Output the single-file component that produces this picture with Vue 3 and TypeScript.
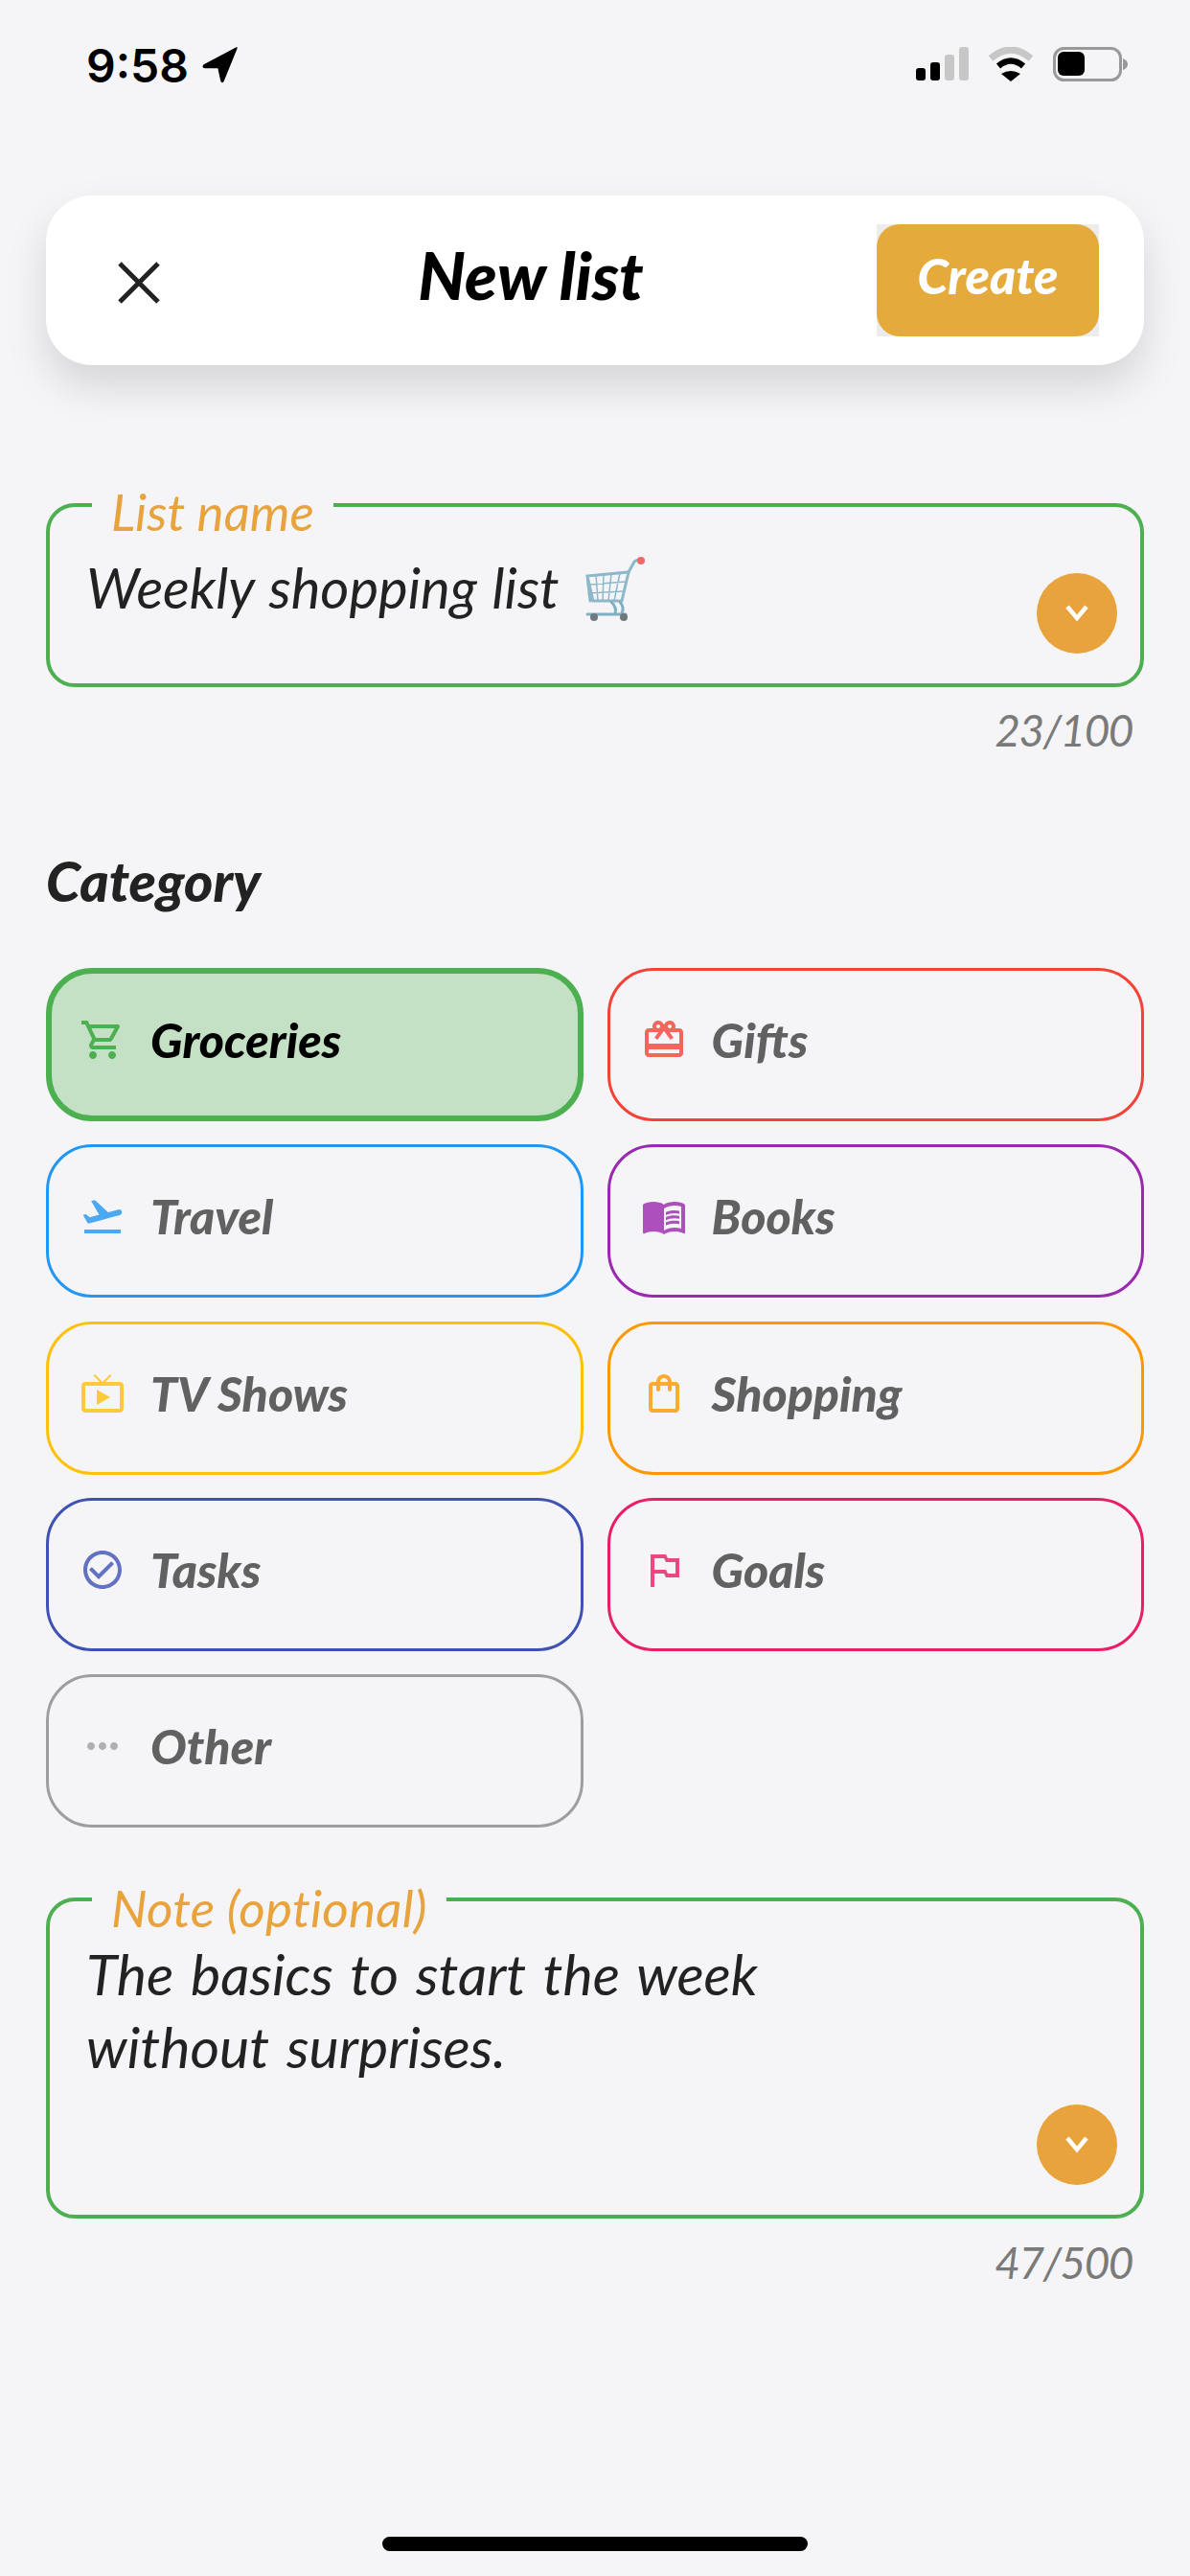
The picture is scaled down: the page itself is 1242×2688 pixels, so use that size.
<script setup lang="ts">
interface Category {
  name: string;
  border: string;
  icon: string;
  selected?: boolean;
}

const categories: Category[] = [
  {
    name: 'Groceries',
    border: '#4caf50',
    selected: true,
    icon: 'M15.55 13c.75 0 1.41-.41 1.75-1.03l3.58-6.49c.37-.66-.11-1.48-.87-1.48H5.21l-.94-2H1v2h2l3.6 7.59-1.35 2.44C4.52 15.37 5.48 17 7 17h12v-2H7l1.1-2h7.45zM6.16 6h12.15l-2.76 5H8.53L6.16 6zM7 18c-1.1 0-1.99.9-1.99 2S5.9 22 7 22s2-.9 2-2-.9-2-2-2zm10 0c-1.1 0-1.99.9-1.99 2s.89 2 1.99 2 2-.9 2-2-.9-2-2-2z',
  },
  {
    name: 'Gifts',
    border: '#f44336',
    icon: 'M20 6h-2.18c.11-.31.18-.65.18-1 0-1.66-1.34-3-3-3-1.05 0-1.96.54-2.5 1.35l-.5.67-.5-.68C10.96 2.54 10.05 2 9 2 7.34 2 6 3.34 6 5c0 .35.07.69.18 1H4c-1.11 0-1.99.89-1.99 2L2 19c0 1.11.89 2 2 2h16c1.11 0 2-.89 2-2V8c0-1.11-.89-2-2-2zm-5-2c.55 0 1 .45 1 1s-.45 1-1 1-1-.45-1-1 .45-1 1-1zM9 4c.55 0 1 .45 1 1s-.45 1-1 1-1-.45-1-1 .45-1 1-1zm11 15H4v-2h16v2zm0-5H4V8h5.08L7 10.83 8.62 12 11 8.76l1-1.36 1 1.36L15.38 12 17 10.83 14.92 8H20v6z',
  },
  {
    name: 'Travel',
    border: '#2196f3',
    icon: 'M2.5 19h19v2h-19zm19.57-9.36c-.21-.8-1.04-1.28-1.84-1.06L14.92 10l-6.9-6.43-1.93.51 4.14 7.17-4.97 1.33-1.97-1.54-1.45.39 1.82 3.16.77 1.33 1.6-.43 5.31-1.42 4.35-1.16L21 11.49c.81-.23 1.28-1.05 1.07-1.85z',
  },
  {
    name: 'Books',
    border: '#9c27b0',
    icon: 'M21 5c-1.11-.35-2.33-.5-3.5-.5-1.95 0-4.05.4-5.5 1.5-1.45-1.1-3.55-1.5-5.5-1.5S2.45 4.9 1 6v14.65c0 .25.25.5.5.5.1 0 .15-.05.25-.05C3.1 20.45 5.05 20 6.5 20c1.95 0 4.05.4 5.5 1.5 1.35-.85 3.8-1.5 5.5-1.5 1.65 0 3.35.3 4.75 1.05.1.05.15.05.25.05.25 0 .5-.25.5-.5V6c-.6-.45-1.25-.75-2-1zm0 13.5c-1.1-.35-2.3-.5-3.5-.5-1.7 0-4.15.65-5.5 1.5V8c1.35-.85 3.8-1.5 5.5-1.5 1.2 0 2.4.15 3.5.5v11.5zM17.5 10.5c.88 0 1.73.09 2.5.26V9.24c-.79-.15-1.64-.24-2.5-.24-1.7 0-3.24.29-4.5.83v1.66c1.13-.64 2.7-.99 4.5-.99zM13 12.49v1.66c1.13-.64 2.7-.99 4.5-.99.88 0 1.73.09 2.5.26V11.9c-.79-.15-1.64-.24-2.5-.24-1.7 0-3.24.3-4.5.83zM17.5 14.33c-1.7 0-3.24.29-4.5.83v1.66c1.13-.64 2.7-.99 4.5-.99.88 0 1.73.09 2.5.26v-1.52c-.79-.16-1.64-.24-2.5-.24z',
  },
  {
    name: 'TV Shows',
    border: '#ffc107',
    icon: 'M9 10v8l7-4zm12-4h-7.58l3.29-3.29L16 2l-4 4-4-4-.71.71L10.58 6H3c-1.1 0-2 .89-2 2v12c0 1.1.9 2 2 2h18c1.1 0 2-.9 2-2V8c0-1.11-.9-2-2-2zm0 14H3V8h18v12z',
  },
  {
    name: 'Shopping',
    border: '#ff9800',
    icon: 'M18 6h-2c0-2.21-1.79-4-4-4S8 3.79 8 6H6c-1.1 0-2 .9-2 2v12c0 1.1.9 2 2 2h12c1.1 0 2-.9 2-2V8c0-1.1-.9-2-2-2zm-6-2c1.1 0 2 .9 2 2h-4c0-1.1.9-2 2-2zm6 16H6V8h2v2c0 .55.45 1 1 1s1-.45 1-1V8h4v2c0 .55.45 1 1 1s1-.45 1-1V8h2v12z',
  },
  {
    name: 'Tasks',
    border: '#3f51b5',
    icon: 'M16.59 7.58L10 14.17l-3.59-3.58L5 12l5 5 8-8zM12 2C6.48 2 2 6.48 2 12s4.48 10 10 10 10-4.48 10-10S17.52 2 12 2zm0 18c-4.42 0-8-3.58-8-8s3.58-8 8-8 8 3.58 8 8-3.58 8-8 8z',
  },
  {
    name: 'Goals',
    border: '#e91e63',
    icon: 'M14 6l-1-2H5v17h2v-7h5l1 2h7V6h-6zm4 8h-4l-1-2H7V6h5l1 2h5v6z',
  },
  {
    name: 'Other',
    border: '#9e9e9e',
    icon: 'M6 10c-1.1 0-2 .9-2 2s.9 2 2 2 2-.9 2-2-.9-2-2-2zm12 0c-1.1 0-2 .9-2 2s.9 2 2 2 2-.9 2-2-.9-2-2-2zm-6 0c-1.1 0-2 .9-2 2s.9 2 2 2 2-.9 2-2-.9-2-2-2z',
  },
];
</script>

<template>
  <div class="page">
    <div class="status-bar">
      <div class="status-bar__time">
        <span>9:58</span>
        <svg width="38" height="38" viewBox="0 0 38 38">
          <path d="M36 1 2 19q-2 2 1 2.500h14l3 14q1 2 2 0z" fill="#000" stroke="#000" stroke-width="1.500" stroke-linejoin="round" />
        </svg>
      </div>
      <svg width="222" height="38" viewBox="0 0 222 38">
        <rect x="0" y="22" width="10" height="13" rx="3" fill="#000" />
        <rect x="15" y="16" width="10" height="19" rx="3" fill="#000" />
        <rect x="30" y="8" width="10" height="27" rx="3" fill="#c7c7c7" />
        <rect x="45" y="0" width="10" height="35" rx="3" fill="#c7c7c7" />
        <path d="M78 12Q99-6 120 12" fill="none" stroke="#c7c7c7" stroke-width="7" />
        <path d="M86 20Q99 9 112 20" fill="none" stroke="#000" stroke-width="6.500" />
        <path d="M89 28Q99 22 109 28L99 36z" fill="#000" />
        <rect x="144.500" y="1.500" width="69" height="33" rx="10" fill="none" stroke="#999" stroke-width="3" />
        <rect x="148" y="5" width="28" height="25" rx="6" fill="#000" />
        <path d="M216 12q5 2 5 6t-5 6z" fill="#999" />
      </svg>
    </div>

    <header class="top-card">
      <button class="top-card__close">
        <svg width="46" height="46" viewBox="0 0 46 46">
          <path d="M3 3 43 43M43 3 3 43" stroke="#222" stroke-width="5" />
        </svg>
      </button>
      <h1 class="top-card__title">New list</h1>
      <div class="top-card__action">
        <button class="top-card__create">Create</button>
      </div>
    </header>

    <section class="field field--name">
      <span class="field__label">List name</span>
      <div class="field__value">
        Weekly shopping list
        <svg class="field__cart" width="64" height="68" viewBox="0 0 64 68">
          <g fill="none" stroke="#8db8c9" stroke-linecap="round">
            <path d="M2 20 45 16 38 46H8zM2 20 5 46" stroke-width="3" />
            <path d="M2 29 42 26M3 38 40 36M11 19l2 27M19 18l-1 28M27 18l-3 28M36 17l-6 29" stroke-width="1.500" />
            <path d="M45 16 51 5q3-2 6-2" stroke-width="3" />
            <path d="M27 47q6 6 4 12M36 47q5 6 2 12M2 60H42" stroke="#7fb0c2" stroke-width="3" />
          </g>
          <circle cx="58" cy="4" r="4" fill="#ee6a66" />
          <circle cx="9" cy="63" r="4" fill="#6f787c" />
          <circle cx="40" cy="63" r="4" fill="#6f787c" />
        </svg>
      </div>
      <button class="field__toggle">
        <svg width="30" height="20" viewBox="0 0 30 20">
          <path d="M5 3 15 15 25 3" fill="none" stroke="#fff" stroke-width="4.500" />
        </svg>
      </button>
    </section>
    <p class="counter">23/100</p>

    <h2 class="section-title">Category</h2>
    <div class="chips">
      <div
        v-for="cat in categories"
        :key="cat.name"
        class="chip"
        :class="{ 'chip--selected': cat.selected }"
        :style="{ borderColor: cat.border }"
      >
        <svg class="chip__icon" width="48" height="48" viewBox="0 0 24 24">
          <path :d="cat.icon" :fill="cat.border" />
        </svg>
        <span class="chip__name">{{ cat.name }}</span>
      </div>
    </div>

    <section class="field field--note">
      <span class="field__label">Note (optional)</span>
      <div class="field__value">The basics to start the week<br />without surprises.</div>
      <button class="field__toggle">
        <svg width="30" height="20" viewBox="0 0 30 20">
          <path d="M5 3 15 15 25 3" fill="none" stroke="#fff" stroke-width="4.500" />
        </svg>
      </button>
    </section>
    <p class="counter counter--note">47/500</p>

    <div class="home-indicator"></div>
  </div>
</template>

<style>
body {
  background: #f5f5f8;
}
</style>

<style scoped>
.page {
  display: flex;
  flex-direction: column;
  box-sizing: border-box;
  width: 1242px;
  height: 2688px;
  padding: 0 48px;
  background: #f5f5f8;
  font-family: Lato, 'Liberation Sans', sans-serif;
  font-style: italic;
  overflow: hidden;
}

.status-bar {
  display: flex;
  justify-content: space-between;
  align-items: flex-start;
  flex: none;
  height: 204px;
  padding: 49px 16px 0 42px;
  box-sizing: border-box;
}

.status-bar__time {
  display: flex;
  align-items: center;
  gap: 14px;
  height: 38px;
  font-family: Inter, sans-serif;
  font-style: normal;
  font-size: 48px;
  font-weight: 600;
  color: #000;
}

.top-card {
  display: flex;
  align-items: center;
  flex: none;
  height: 177px;
  padding-right: 47px;
  border-radius: 48px;
  background: #fff;
  box-shadow: 0 22px 44px rgba(0, 0, 0, 0.13);
}

.top-card__close {
  display: flex;
  align-items: center;
  justify-content: center;
  width: 193px;
  height: 100%;
  padding: 0;
  border: 0;
  background: none;
  flex: none;
  margin-top: 4px;
  margin-right: -48px;
}

.top-card__title {
  flex: 1;
  margin: 0;
  padding-bottom: 12px;
  text-align: center;
  font-size: 69px;
  font-weight: 900;
  color: #000;
}

.top-card__action {
  flex: none;
  background: #ececec;
}

.top-card__create {
  display: block;
  width: 232px;
  height: 117px;
  padding: 0 0 12px;
  border: 0;
  border-radius: 24px;
  background: #e5aa3c;
  color: #fff;
  font: italic 900 52px Lato, 'Liberation Sans', sans-serif;
}

.field {
  position: relative;
  flex: none;
  box-sizing: border-box;
  border: 4px solid #4caf50;
  border-radius: 30px;
}

.field--name {
  height: 192px;
  margin-top: 144px;
}

.field--note {
  height: 335px;
  margin-top: 73px;
}

.field__label {
  position: absolute;
  top: -23px;
  left: 44px;
  padding: 0 20px;
  background: linear-gradient(#f5f5f8, #f5f5f8) top / 100% 40px no-repeat;
  color: #e8a33d;
  font-size: 53px;
  line-height: 56px;
}

.field--note .field__label {
  top: -21px;
  letter-spacing: 0.200px;
}

.field__value {
  padding: 46px 0 0 38px;
  color: #222;
  font-size: 58px;
  line-height: 76px;
  word-spacing: 2px;
}

.field--note .field__value {
  padding-top: 38px;
  font-size: 59px;
  word-spacing: 4px;
}

.field__cart {
  margin-left: 12px;
  vertical-align: -14px;
}

.field__toggle {
  position: absolute;
  right: 24px;
  bottom: 31px;
  display: flex;
  align-items: center;
  justify-content: center;
  width: 84px;
  height: 84px;
  padding: 0;
  border: 0;
  border-radius: 50%;
  background: #e8a33d;
}

.counter {
  flex: none;
  margin: 17px 12px 0 0;
  text-align: right;
  color: #7a7a7a;
  font-size: 46px;
  letter-spacing: -1.500px;
  line-height: 56px;
}

.counter--note {
  margin-top: 18px;
}

.section-title {
  flex: none;
  margin: 94px 0 0;
  color: #222;
  font-size: 58px;
  font-weight: 900;
  line-height: 70px;
}

.chips {
  display: grid;
  grid-template-columns: 1fr 1fr;
  gap: 24.250px 25px;
  flex: none;
  margin-top: 56px;
}

.chip {
  display: flex;
  align-items: center;
  gap: 26px;
  box-sizing: border-box;
  height: 160px;
  padding: 0 0 10px 32px;
  border: 3px solid;
  border-radius: 48px;
}

.chip--selected {
  padding-left: 29px;
  border-width: 6px;
  background: #c4e1c5;
}

.chip__icon {
  flex: none;
  opacity: 0.8;
}

.chip--selected .chip__icon {
  opacity: 1;
}

.chip__name {
  color: #616161;
  font-size: 50px;
  font-weight: 900;
}

.chip--selected .chip__name {
  color: #000;
}

.home-indicator {
  flex: none;
  align-self: center;
  width: 444px;
  height: 15px;
  margin-top: auto;
  margin-bottom: 26px;
  border-radius: 8px;
  background: #000;
}
</style>
